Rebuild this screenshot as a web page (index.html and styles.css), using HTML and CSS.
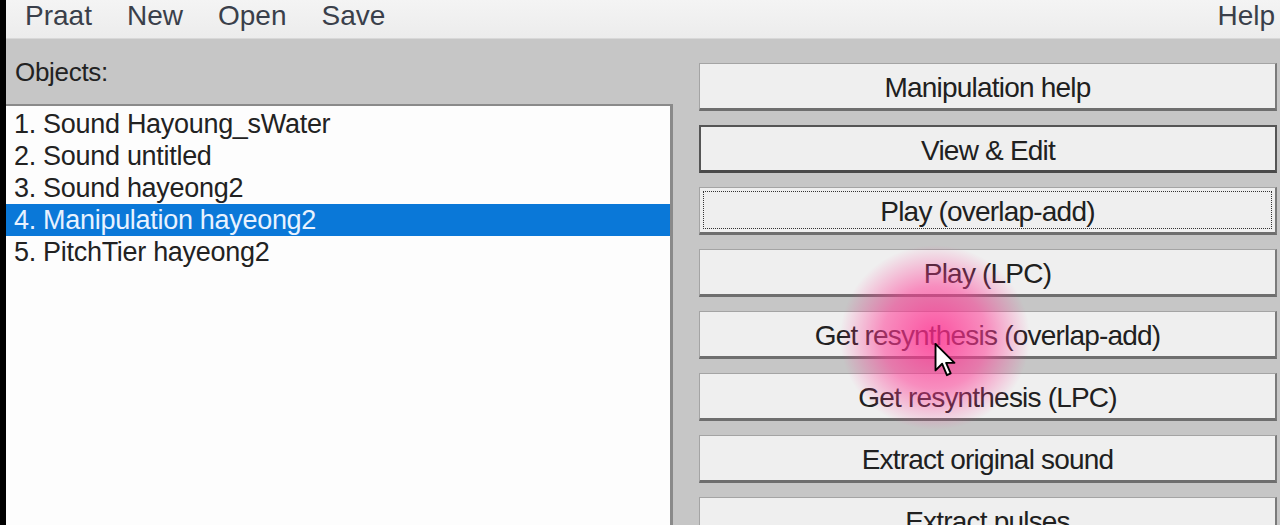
FILE: index.html
```html
<!DOCTYPE html>
<html>
<head>
    <meta name="viewport" content="width=device-width, initial-scale=1">
    <link rel="stylesheet" href="styles.css">
</head>
<body>
    <div class="edge"></div>
    <div class="window">
        <div class="menubar">
            <span class="menu">Praat</span>
            <span class="menu">New</span>
            <span class="menu">Open</span>
            <span class="menu">Save</span>
            <span class="menu help">Help</span>
        </div>

        <div class="main">
            <div class="objects">
                <div class="label">Objects:</div>
                <div class="list">
                    <div class="row">1. Sound Hayoung_sWater</div>
                    <div class="row">2. Sound untitled</div>
                    <div class="row">3. Sound hayeong2</div>
                    <div class="row selected">4. Manipulation hayeong2</div>
                    <div class="row">5. PitchTier hayeong2</div>
                </div>
            </div>

            <div class="actions">
                <button class="btn">Manipulation help</button>
                <button class="btn default">View &amp; Edit</button>
                <button class="btn focused"><span>Play (overlap-add)</span></button>
                <button class="btn">Play (LPC)</button>
                <button class="btn">Get resynthesis (overlap-add)</button>
                <button class="btn">Get resynthesis (LPC)</button>
                <button class="btn">Extract original sound</button>
                <button class="btn">Extract pulses</button>
            </div>
        </div>
    </div>

    <!-- click highlight from the screen recording -->
    <div class="glow"></div>
    <svg class="cursor" width="24" height="36" viewBox="0 0 12 19">
        <path d="M1 1 L1 15 L4.5 11.5 L7 17.5 L9 16.6 L6.6 11 L11 11 Z" fill="#fff" stroke="#000" stroke-width="1" stroke-linejoin="round"/>
    </svg>
</body>
</html>
```

FILE: styles.css
```css
body {
    margin: 0;
    padding: 0;
    height: 525px;
    overflow: hidden;
    display: flex;
    background-color: #c6c6c6;
    font-family: "Liberation Sans", Arial, sans-serif;
    color: #222;
}

.edge {
    width: 6px;
    flex-shrink: 0;
    background-color: #000;
}

.window {
    flex: 1;
    display: flex;
    flex-direction: column;
}

/* Menu bar */
.menubar {
    height: 40px;
    display: flex;
    align-items: center;
    padding: 0 5px 6px 19px;
    box-sizing: border-box;
    background: linear-gradient(#f4f4f4, #ececec);
    border-bottom: 1px solid #d8d8d8;
}

.menu {
    font-size: 28px;
    color: #3a3f4a;
    margin-right: 35px;
}

.menu.help {
    margin-left: auto;
    margin-right: 0;
}

/* Main area */
.main {
    flex: 1;
    display: flex;
}

.objects {
    width: 667px;
    display: flex;
    flex-direction: column;
}

.label {
    font-size: 26px;
    height: 65px;
    padding: 18px 0 0 9px;
    box-sizing: border-box;
    letter-spacing: -0.3px;
}

.list {
    flex: 1;
    background-color: #fdfdfd;
    border-top: 2px solid #8a8a8a;
    border-right: 3px solid #8a8a8a;
    padding-top: 2px;
}

.row {
    height: 32px;
    line-height: 33px;
    font-size: 27px;
    padding-left: 8px;
    white-space: nowrap;
    letter-spacing: -0.3px;
}

.row.selected {
    background-color: #0a78d8;
    color: #e8f2ff;
}

.actions {
    flex: 1;
    display: flex;
    flex-direction: column;
    gap: 14px;
    padding: 24px 3px 0 26px;
}

.btn {
    height: 48px;
    flex-shrink: 0;
    background-color: #efefef;
    border: 1px solid #a4a4a4;
    border-right: 2px solid #7a7a7a;
    border-bottom: 3px solid #6e6e6e;
    font-family: "Liberation Sans", Arial, sans-serif;
    font-size: 28px;
    color: #202020;
    letter-spacing: -0.8px;
    padding: 4px 0 0 0;
}

.btn.default {
    border: 2px solid #555;
    border-bottom: 3px solid #4a4a4a;
}

.btn.focused {
    padding: 3px;
}

.btn.focused span {
    display: flex;
    align-items: center;
    justify-content: center;
    height: 100%;
    padding-top: 3px;
    border: 1px dotted #333;
    box-sizing: border-box;
}

/* Overlays */
.glow {
    position: absolute;
    left: 840px;
    top: 245px;
    width: 190px;
    height: 185px;
    border-radius: 50%;
    background: radial-gradient(closest-side, rgba(255, 40, 140, 0.8), rgba(255, 60, 150, 0.55) 55%, rgba(255, 90, 170, 0) 100%);
    pointer-events: none;
}

.cursor {
    position: absolute;
    left: 933px;
    top: 342px;
}
```
